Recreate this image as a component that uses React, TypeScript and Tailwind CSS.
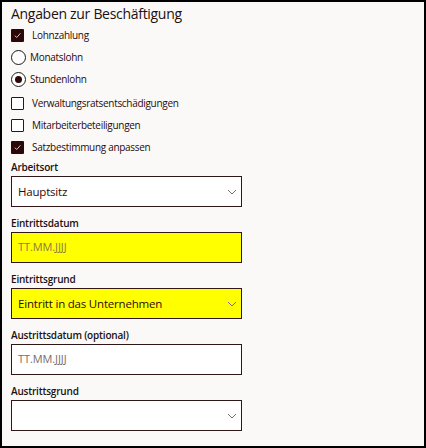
import React from 'react';

const font = { fontFamily: '"Open Sans", "Noto Sans", sans-serif' };

function Check({ checked, label }: { checked?: boolean; label: string }) {
  return (
    <div className="flex h-[22px] items-center">
      <div
        className={
          checked
            ? 'flex h-[13px] w-[13px] items-center justify-center rounded-[1px] bg-[#2b0707]'
            : 'h-[13px] w-[13px] rounded-[1px] border border-[#2b1515] bg-white'
        }
      >
        {checked && (
          <svg width="9" height="9" viewBox="0 0 10 10" fill="none">
            <path d="M2 5.2 L4.2 7.2 L8.2 2.6" stroke="#b9c4e6" strokeWidth="1.1" />
          </svg>
        )}
      </div>
      <span className="ml-[8px] text-[10px] tracking-[-0.3px] text-[#2b0a0a]">{label}</span>
    </div>
  );
}

function Radio({ checked, label }: { checked?: boolean; label: string }) {
  return (
    <div className="flex h-[22px] items-center">
      <div className="flex h-[15px] w-[15px] items-center justify-center rounded-full border border-[#1a1a1a] bg-white">
        {checked && <div className="h-[7px] w-[7px] rounded-full bg-[#2b0707]" />}
      </div>
      <span className="ml-[4px] text-[10px] tracking-[-0.3px] text-[#2b0a0a]">{label}</span>
    </div>
  );
}

function Chevron() {
  return (
    <svg width="10" height="6" viewBox="0 0 10 6" fill="none" className="mr-[4px]">
      <path d="M1 1 L5 5 L9 1" stroke="#7a6b6b" strokeWidth="1" />
    </svg>
  );
}

function Field({
  label,
  value,
  placeholder,
  select,
  highlight,
}: {
  label: string;
  value?: string;
  placeholder?: string;
  select?: boolean;
  highlight?: boolean;
}) {
  return (
    <div className="mb-[9px] flex flex-col">
      <div className="h-[14px] text-[10px] leading-[14px] font-semibold tracking-[-0.2px] text-[#201010]">
        {label}
      </div>
      <div
        className={
          'mt-[2px] flex h-[31px] w-[231px] items-center justify-between border border-[#301818] pl-[6px] ' +
          (highlight ? 'bg-[#ffff00]' : 'bg-white')
        }
      >
        {value ? (
          <span className="text-[11.5px] tracking-[-0.2px] text-[#2b0a0a]">{value}</span>
        ) : (
          <span
            className={
              highlight
                ? 'text-[11px] tracking-[-0.1px] text-[#8a7a45]'
                : 'text-[11px] tracking-[-0.1px] text-[#7a6b6b]'
            }
          >
            {placeholder}
          </span>
        )}
        {select && <Chevron />}
      </div>
    </div>
  );
}

export default function App() {
  return (
    <div
      className="box-border h-[448px] w-[426px] overflow-hidden border-2 border-black bg-[#faf9f8] pl-[9px]"
      style={font}
    >
      <h2 className="mt-[2px] h-[20px] text-[14px] leading-[20px] tracking-[-0.3px] text-[#201010]">
        Angaben zur Beschäftigung
      </h2>
      <Check checked label="Lohnzahlung" />
      <Radio label="Monatslohn" />
      <Radio checked label="Stundenlohn" />
      <div className="mt-[2px]">
        <Check label="Verwaltungsratsentschädigungen" />
        <Check label="Mitarbeiterbeteiligungen" />
        <Check checked label="Satzbestimmung anpassen" />
      </div>
      <div className="mt-[2px]">
        <Field label="Arbeitsort" value="Hauptsitz" select />
        <Field label="Eintrittsdatum" placeholder="TT.MM.JJJJ" highlight />
        <Field label="Eintrittsgrund" value="Eintritt in das Unternehmen" select highlight />
        <Field label="Austrittsdatum (optional)" placeholder="TT.MM.JJJJ" />
        <Field label="Austrittsgrund" select />
      </div>
    </div>
  );
}
